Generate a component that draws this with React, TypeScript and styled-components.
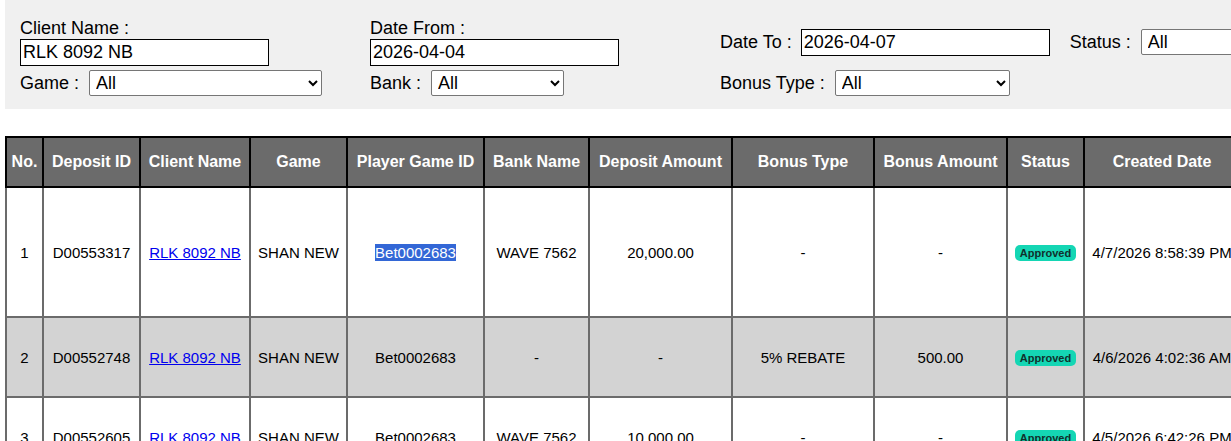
import styled, { createGlobalStyle } from "styled-components";

const GlobalStyle = createGlobalStyle`
  html, body {
    margin: 0;
    padding: 0;
    background: #fff;
    overflow: hidden;
  }
  body {
    font-family: "Liberation Sans", Arial, sans-serif;
    color: #000;
  }
`;

const Page = styled.div`
  padding: 0 0 0 5px;
  width: 1400px;
`;

const FilterPanel = styled.div`
  background: #f0f0f0;
  height: 109px;
  box-sizing: border-box;
  padding: 15px 0 0 15px;
  display: grid;
  grid-template-columns: 350px 350px 1fr;
  font-size: 18px;
`;

const FilterColumn = styled.div`
  display: flex;
  flex-direction: column;
  gap: 4px;
`;

const Stacked = styled.div`
  display: flex;
  flex-direction: column;
  height: 51px;
  justify-content: flex-end;
`;

const Inline = styled.div<{ $tall?: boolean }>`
  display: flex;
  align-items: center;
  box-sizing: border-box;
  height: ${(p) => (p.$tall ? "51px" : "26px")};
  padding-top: ${(p) => (p.$tall ? "3px" : "0")};
  gap: 20px;
`;

const Label = styled.label`
  display: flex;
  align-items: center;
  white-space: nowrap;
  line-height: 21px;
`;

const TextInput = styled.input<{ $inline?: boolean }>`
  font-family: inherit;
  font-size: 18px;
  width: 249px;
  height: 27px;
  box-sizing: border-box;
  border: 1px solid #000;
  padding: 0 2px;
  margin: 0 0 0 ${(p) => (p.$inline ? "9px" : "0")};
  background: #fff;
  color: #000;
`;

const Select = styled.select<{ $w: number }>`
  font-family: inherit;
  font-size: 18px;
  width: ${(p) => p.$w}px;
  height: 26px;
  box-sizing: border-box;
  border: 1px solid #767676;
  border-radius: 2px;
  margin-left: 10px;
  padding: 0 2px;
  background: #fff;
  color: #000;
`;

const Table = styled.table`
  margin-top: 27px;
  border-collapse: collapse;
  table-layout: fixed;
  width: 1234px;
  font-size: 15px;
`;

const HeadCell = styled.th`
  background: #6b6b6b;
  color: #fff;
  font-size: 16px;
  font-weight: bold;
  height: 48px;
  border: 2px solid #000;
  padding: 0 4px;
  text-align: center;
  white-space: nowrap;
`;

const Row = styled.tr<{ $h: number; $shaded: boolean }>`
  height: ${(p) => p.$h}px;
  background: ${(p) => (p.$shaded ? "#d3d3d3" : "#fff")};
`;

const Cell = styled.td`
  border: 2px solid #6b6b6b;
  text-align: center;
  vertical-align: middle;
  padding: 0 4px;
  white-space: nowrap;
`;

const ClientLink = styled.a`
  color: #0000ee;
  text-decoration: underline;
`;

const Selected = styled.span`
  background: #3367d6;
  color: #fff;
`;

const Badge = styled.span`
  display: inline-block;
  background: #14d6b4;
  color: #10302c;
  font-size: 11px;
  font-weight: bold;
  line-height: 16px;
  padding: 0 5px;
  border-radius: 5px;
`;

const columns: [string, number][] = [
  ["No.", 37],
  ["Deposit ID", 97],
  ["Client Name", 110],
  ["Game", 97],
  ["Player Game ID", 137],
  ["Bank Name", 105],
  ["Deposit Amount", 143],
  ["Bonus Type", 142],
  ["Bonus Amount", 133],
  ["Status", 77],
  ["Created Date", 156],
];

type Deposit = {
  no: number;
  id: string;
  bank: string;
  amount: string;
  bonusType: string;
  bonusAmount: string;
  created: string;
  height: number;
  selected?: boolean;
};

const deposits: Deposit[] = [
  { no: 1, id: "D00553317", bank: "WAVE 7562", amount: "20,000.00", bonusType: "-", bonusAmount: "-", created: "4/7/2026 8:58:39 PM", height: 130, selected: true },
  { no: 2, id: "D00552748", bank: "-", amount: "-", bonusType: "5% REBATE", bonusAmount: "500.00", created: "4/6/2026 4:02:36 AM", height: 80 },
  { no: 3, id: "D00552605", bank: "WAVE 7562", amount: "10,000.00", bonusType: "-", bonusAmount: "-", created: "4/5/2026 6:42:26 PM", height: 80 },
];

function App() {
  return (
    <>
      <GlobalStyle />
      <Page>
        <FilterPanel>
          <FilterColumn>
            <Stacked>
              <Label>Client Name :</Label>
              <TextInput defaultValue="RLK 8092 NB" />
            </Stacked>
            <Inline>
              <Label>
                Game :
                <Select $w={233}>
                  <option>All</option>
                </Select>
              </Label>
            </Inline>
          </FilterColumn>
          <FilterColumn>
            <Stacked>
              <Label>Date From :</Label>
              <TextInput defaultValue="2026-04-04" />
            </Stacked>
            <Inline>
              <Label>
                Bank :
                <Select $w={133}>
                  <option>All</option>
                </Select>
              </Label>
            </Inline>
          </FilterColumn>
          <FilterColumn>
            <Inline $tall>
              <Label>
                Date To :
                <TextInput $inline defaultValue="2026-04-07" />
              </Label>
              <Label>
                Status :
                <Select $w={140}>
                  <option>All</option>
                </Select>
              </Label>
            </Inline>
            <Inline>
              <Label>
                Bonus Type :
                <Select $w={175}>
                  <option>All</option>
                </Select>
              </Label>
            </Inline>
          </FilterColumn>
        </FilterPanel>

        <Table>
          <colgroup>
            {columns.map(([name, w]) => (
              <col key={name} style={{ width: w }} />
            ))}
          </colgroup>
          <thead>
            <tr>
              {columns.map(([name]) => (
                <HeadCell key={name}>{name}</HeadCell>
              ))}
            </tr>
          </thead>
          <tbody>
            {deposits.map((d) => (
              <Row key={d.id} $h={d.height} $shaded={d.no % 2 === 0}>
                <Cell>{d.no}</Cell>
                <Cell>{d.id}</Cell>
                <Cell>
                  <ClientLink href="#">RLK 8092 NB</ClientLink>
                </Cell>
                <Cell>SHAN NEW</Cell>
                <Cell>{d.selected ? <Selected>Bet0002683</Selected> : "Bet0002683"}</Cell>
                <Cell>{d.bank}</Cell>
                <Cell>{d.amount}</Cell>
                <Cell>{d.bonusType}</Cell>
                <Cell>{d.bonusAmount}</Cell>
                <Cell>
                  <Badge>Approved</Badge>
                </Cell>
                <Cell>{d.created}</Cell>
              </Row>
            ))}
          </tbody>
        </Table>
      </Page>
    </>
  );
}

export default App;
